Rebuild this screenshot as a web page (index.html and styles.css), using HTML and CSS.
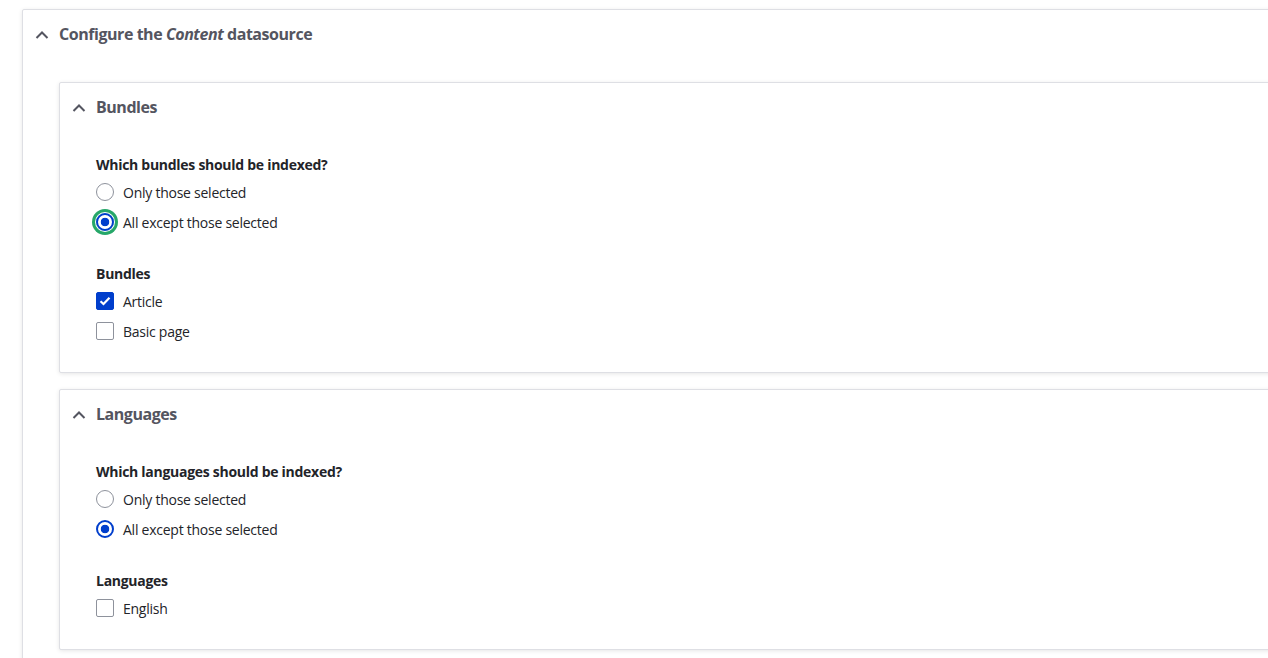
FILE: index.html
```html
<!DOCTYPE html>
<html lang="en">
<head>
  <meta charset="UTF-8" />
  <title>Configure the Content datasource</title>
  <link rel="stylesheet" href="styles.css">
</head>
<body>

  <div class="page">
    <div class="details outer">
      <div class="summary">
        <svg class="chevron" viewBox="0 0 14 9"><path d="M1.5 8L7 2.5L12.5 8" fill="none" stroke="#545560" stroke-width="2"/></svg>
        <span>Configure the <em>Content</em> datasource</span>
      </div>

      <div class="outer-body">

        <div class="details inner">
          <div class="summary">
            <svg class="chevron" viewBox="0 0 14 9"><path d="M1.5 8L7 2.5L12.5 8" fill="none" stroke="#545560" stroke-width="2"/></svg>
            <span>Bundles</span>
          </div>
          <div class="details-body">
            <div class="form-group">
              <div class="label">Which bundles should be indexed?</div>
              <label class="option"><span class="radio"></span>Only those selected</label>
              <label class="option"><span class="radio checked focused"></span>All except those selected</label>
            </div>
            <div class="form-group">
              <div class="label">Bundles</div>
              <label class="option"><span class="checkbox checked"><svg width="12" height="10" viewBox="0 0 12 10"><path d="M1.5 5.2L4.5 8L10.5 1.8" fill="none" stroke="#fff" stroke-width="2.2"/></svg></span>Article</label>
              <label class="option"><span class="checkbox"></span>Basic page</label>
            </div>
          </div>
        </div>

        <div class="details inner">
          <div class="summary">
            <svg class="chevron" viewBox="0 0 14 9"><path d="M1.5 8L7 2.5L12.5 8" fill="none" stroke="#545560" stroke-width="2"/></svg>
            <span>Languages</span>
          </div>
          <div class="details-body">
            <div class="form-group">
              <div class="label">Which languages should be indexed?</div>
              <label class="option"><span class="radio"></span>Only those selected</label>
              <label class="option"><span class="radio checked"></span>All except those selected</label>
            </div>
            <div class="form-group">
              <div class="label">Languages</div>
              <label class="option"><span class="checkbox"></span>English</label>
            </div>
          </div>
        </div>

      </div>
    </div>
  </div>

</body>
</html>
```

FILE: styles.css
```css
body {
  font-family: 'Open Sans', 'Noto Sans', sans-serif;
  background: #ffffff;
  margin: 0;
  padding: 0;
  color: #232429;
  overflow: hidden;
}

.page {
  padding: 9px 0 0 22px;
}

.details {
  background: #ffffff;
  border: 1px solid #dedfe4;
  border-radius: 2px;
  box-shadow: 0 1px 4px rgba(0, 0, 0, 0.1);
}

.outer {
  width: 1320px;
  height: 700px;
}

.summary {
  display: flex;
  align-items: center;
  gap: 10px;
  height: 48px;
  padding-left: 12px;
  font-size: 16px;
  font-weight: bold;
  letter-spacing: -0.45px;
  color: #545560;
}

.chevron {
  width: 14px;
  height: 9px;
  flex: none;
}

.outer-body {
  padding: 24px 0 0 36px;
}

.inner {
  margin-bottom: 16px;
}

.details-body {
  padding: 25px 0 26px 36px;
}

.form-group + .form-group {
  margin-top: 28px;
}

.label {
  font-size: 14px;
  font-weight: bold;
  line-height: 18px;
  letter-spacing: -0.28px;
  margin-bottom: 3px;
}

.option {
  display: flex;
  align-items: center;
  gap: 9px;
  height: 30px;
  font-size: 14px;
  letter-spacing: -0.25px;
}

.radio,
.checkbox {
  box-sizing: border-box;
  width: 18px;
  height: 18px;
  border: 1px solid #8e929c;
  background: #fff;
  flex: none;
}

.radio {
  border-radius: 50%;
}

.radio.checked {
  border: 2px solid #003ecc;
  background: radial-gradient(circle, #003ecc 0 4px, #fff 4.6px);
}

.radio.focused {
  box-shadow: 0 0 0 1px #fff, 0 0 0 4px #26a769;
}

.checkbox {
  border-radius: 2px;
}

.checkbox.checked {
  background: #003ecc;
  border-color: #003ecc;
  display: flex;
  align-items: center;
  justify-content: center;
}
```
